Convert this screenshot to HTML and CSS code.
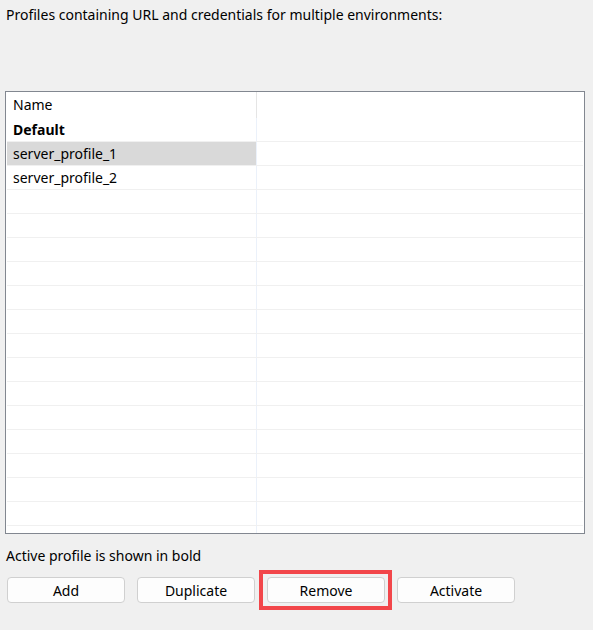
FILE: index.html
```html
<!DOCTYPE html>
<html>
<head>
<meta charset="utf-8">
<link rel="stylesheet" href="styles.css">
</head>
<body>
<div class="panel">
  <p class="intro">Profiles containing URL and credentials for multiple environments:</p>
  <div class="table">
    <div class="row head">
      <div class="cell name">Name</div>
      <div class="cell rest"></div>
    </div>
    <div class="row"><div class="cell name bold">Default</div><div class="cell rest"></div></div>
    <div class="row selected"><div class="cell name">server_profile_1</div><div class="cell rest"></div></div>
    <div class="row"><div class="cell name">server_profile_2</div><div class="cell rest"></div></div>
    <div class="row"><div class="cell name"></div><div class="cell rest"></div></div>
    <div class="row"><div class="cell name"></div><div class="cell rest"></div></div>
    <div class="row"><div class="cell name"></div><div class="cell rest"></div></div>
    <div class="row"><div class="cell name"></div><div class="cell rest"></div></div>
    <div class="row"><div class="cell name"></div><div class="cell rest"></div></div>
    <div class="row"><div class="cell name"></div><div class="cell rest"></div></div>
    <div class="row"><div class="cell name"></div><div class="cell rest"></div></div>
    <div class="row"><div class="cell name"></div><div class="cell rest"></div></div>
    <div class="row"><div class="cell name"></div><div class="cell rest"></div></div>
    <div class="row"><div class="cell name"></div><div class="cell rest"></div></div>
    <div class="row"><div class="cell name"></div><div class="cell rest"></div></div>
    <div class="row"><div class="cell name"></div><div class="cell rest"></div></div>
    <div class="row"><div class="cell name"></div><div class="cell rest"></div></div>
    <div class="row"><div class="cell name"></div><div class="cell rest"></div></div>
    <div class="row"><div class="cell name"></div><div class="cell rest"></div></div>
  </div>
  <p class="note">Active profile is shown in bold</p>
  <div class="buttons">
    <button class="btn">Add</button>
    <button class="btn">Duplicate</button>
    <button class="btn focus">Remove</button>
    <button class="btn">Activate</button>
  </div>
</div>
</body>
</html>
```

FILE: styles.css
```css
html, body {
  margin: 0;
  padding: 0;
  background: #f0f0f0;
}

body {
  font-family: "Noto Sans", "Open Sans", sans-serif;
  font-size: 14px;
  color: #000;
}

.panel {
  width: 593px;
  height: 630px;
  padding: 0 8px 0 5px;
  box-sizing: border-box;
}

.intro {
  margin: 0;
  padding: 5px 0 0 1px;
  height: 91px;
  box-sizing: border-box;
  line-height: 20px;
}

.table {
  height: 443px;
  border: 1px solid #828790;
  background: #fff;
  padding: 0 1px;
  box-sizing: border-box;
  overflow: hidden;
}

.row {
  display: flex;
  height: 24px;
  box-sizing: border-box;
  border-bottom: 1px solid #f0f0f0;
}

.row.head {
  height: 26px;
  border-bottom: none;
}

.cell {
  box-sizing: border-box;
  line-height: 23px;
}

.cell.name {
  width: 250px;
  padding-left: 6px;
  border-right: 1px solid #ebf1fa;
  white-space: nowrap;
}

.cell.rest {
  flex: 1;
}

.head .cell {
  line-height: 26px;
}

.head .cell.name {
  border-right: 1px solid #e5e5e5;
}

.bold {
  font-weight: bold;
}

.selected .cell.name {
  background: #d9d9d9;
}

.note {
  margin: 0;
  padding: 12px 0 0 1px;
  height: 43px;
  box-sizing: border-box;
  line-height: 20px;
}

.buttons {
  display: flex;
  gap: 12px;
  padding-left: 2px;
}

.btn {
  width: 118px;
  height: 26px;
  background: #fdfdfd;
  border: 1px solid #d0d0d0;
  border-radius: 4px;
  font-family: inherit;
  font-size: 14px;
  color: #000;
  padding: 0;
}

.btn.focus {
  position: relative;
}

/* focus frame drawn around the current button */
.btn.focus::after {
  content: "";
  position: absolute;
  left: -9px;
  top: -8px;
  right: -8px;
  bottom: -8px;
  border: 4px solid #f2464a;
}
```
